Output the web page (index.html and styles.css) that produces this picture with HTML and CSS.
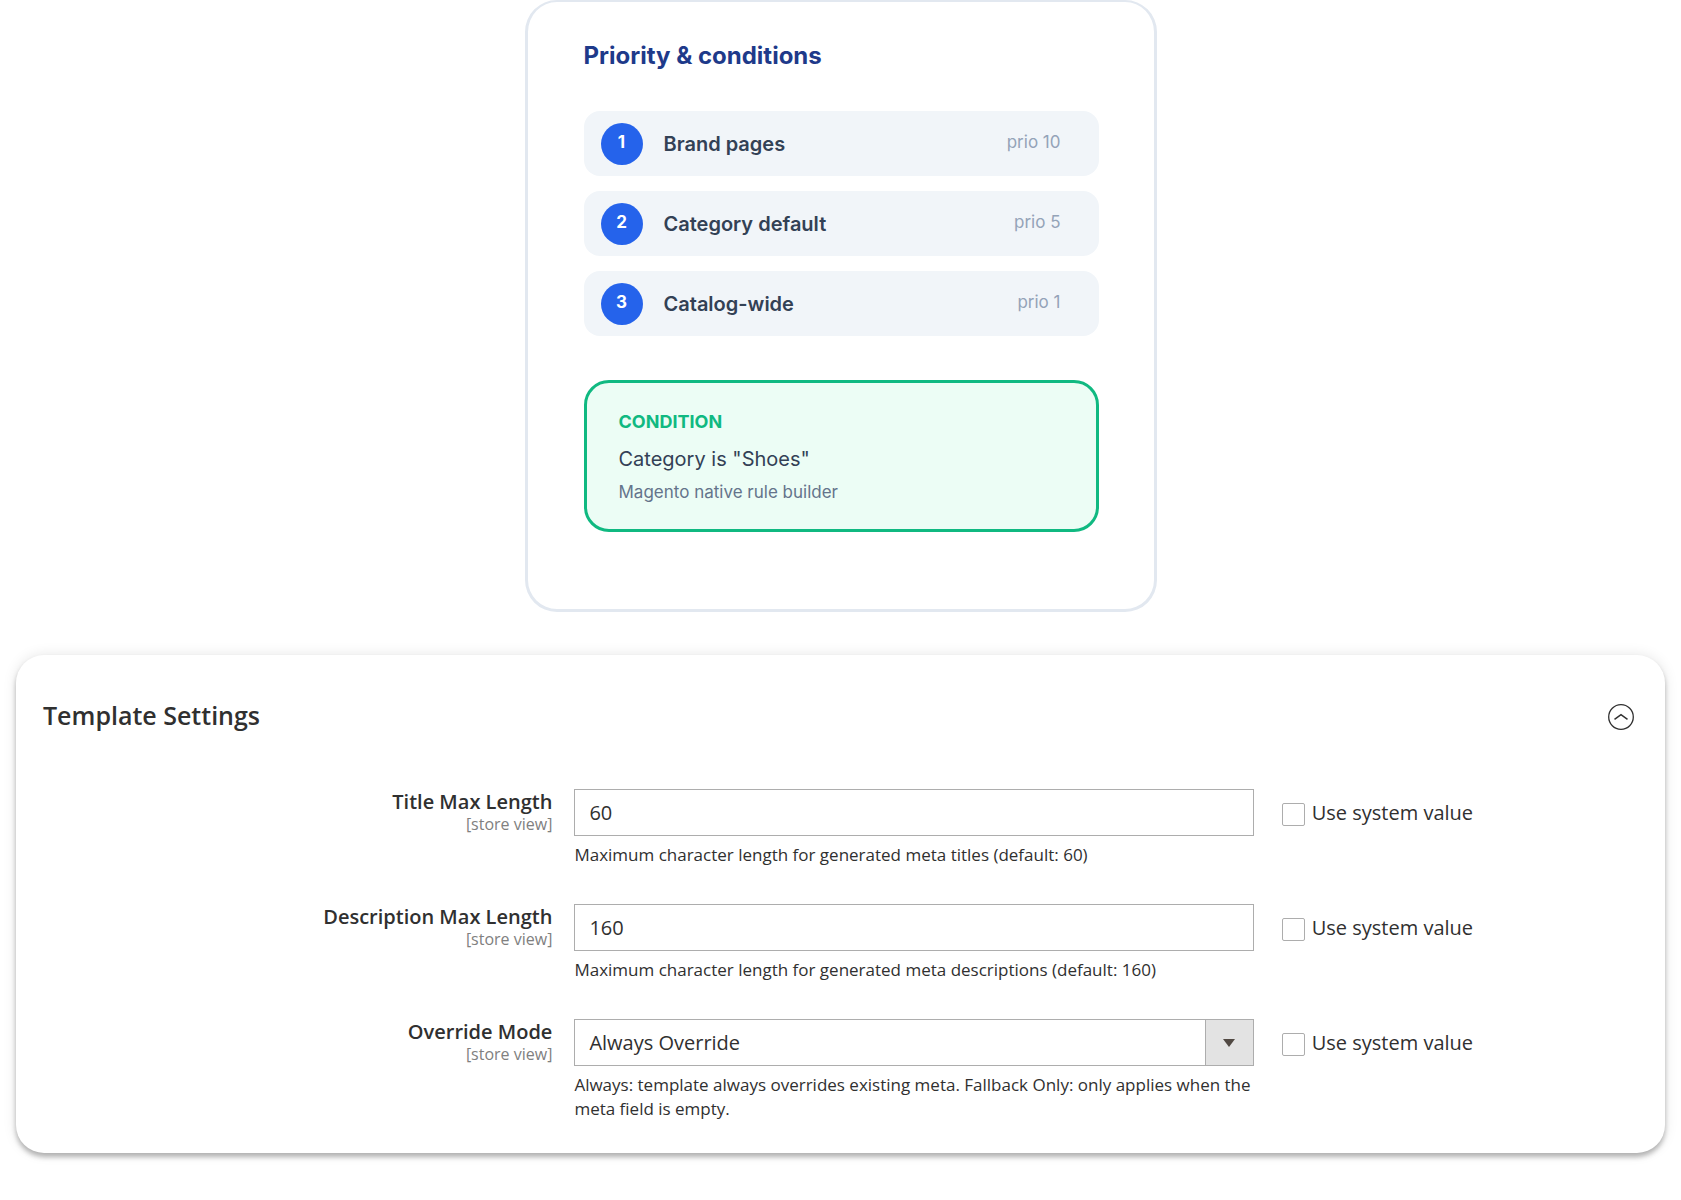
FILE: index.html
```html
<!DOCTYPE html>
<html lang="en">

<head>
    <meta charset="UTF-8">
    <meta name="viewport" content="width=device-width, initial-scale=1.0">
    <title>Template Settings</title>
    <link rel="stylesheet" href="styles.css">
</head>

<body>
    <section class="priority-card">
        <h2>Priority &amp; conditions</h2>
        <ol class="rules">
            <li class="rule">
                <span class="rule-number">1</span>
                <span class="rule-name">Brand pages</span>
                <span class="rule-prio">prio 10</span>
            </li>
            <li class="rule">
                <span class="rule-number">2</span>
                <span class="rule-name">Category default</span>
                <span class="rule-prio">prio 5</span>
            </li>
            <li class="rule">
                <span class="rule-number">3</span>
                <span class="rule-name">Catalog-wide</span>
                <span class="rule-prio">prio 1</span>
            </li>
        </ol>
        <div class="condition">
            <h3>CONDITION</h3>
            <p class="condition-rule">Category is "Shoes"</p>
            <p class="condition-note">Magento native rule builder</p>
        </div>
    </section>

    <form class="settings">
        <div class="settings-header">
            <h2>Template Settings</h2>
            <button type="button" class="collapse" aria-label="Collapse section">
                <svg width="26" height="26" viewBox="0 0 26 26" fill="none" stroke="#303030">
                    <circle cx="13" cy="13" r="12.3" stroke-width="1.3" />
                    <path d="M6.5 15.3 L13 10.7 L19.5 15.3" stroke-width="1.5" />
                </svg>
            </button>
        </div>

        <div class="field">
            <label class="field-label" for="titleLength">Title Max Length <span class="scope">[store view]</span></label>
            <div class="field-control">
                <input type="text" id="titleLength" name="titleLength" value="60">
                <p class="note">Maximum character length for generated meta titles (default: 60)</p>
            </div>
            <div class="use-system">
                <input type="checkbox" id="titleSystem" name="titleSystem">
                <label for="titleSystem">Use system value</label>
            </div>
        </div>

        <div class="field">
            <label class="field-label" for="descLength">Description Max Length <span class="scope">[store view]</span></label>
            <div class="field-control">
                <input type="text" id="descLength" name="descLength" value="160">
                <p class="note">Maximum character length for generated meta descriptions (default: 160)</p>
            </div>
            <div class="use-system">
                <input type="checkbox" id="descSystem" name="descSystem">
                <label for="descSystem">Use system value</label>
            </div>
        </div>

        <div class="field">
            <label class="field-label" for="overrideMode">Override Mode <span class="scope">[store view]</span></label>
            <div class="field-control">
                <div class="select-wrap">
                    <select id="overrideMode" name="overrideMode">
                        <option>Always Override</option>
                        <option>Fallback Only</option>
                    </select>
                    <span class="select-arrow"></span>
                </div>
                <p class="note">Always: template always overrides existing meta. Fallback Only: only applies when the meta field is empty.</p>
            </div>
            <div class="use-system">
                <input type="checkbox" id="overrideSystem" name="overrideSystem">
                <label for="overrideSystem">Use system value</label>
            </div>
        </div>
    </form>
</body>

</html>
```

FILE: styles.css
```css
* {
    box-sizing: border-box;
}

body {
    margin: 0;
    background-color: white;
    font-family: "Open Sans", sans-serif;
    color: #303030;
}

h2,
h3,
p {
    margin: 0;
}

/* Priority card */

.priority-card {
    max-width: 632px;
    margin: 0 auto;
    padding: 38px 55px 77px 56px;
    border: 3px solid #e2e8f0;
    border-top-width: 2px;
    border-radius: 32px;
    font-family: Inter, sans-serif;
}

.priority-card h2 {
    font-size: 24px;
    line-height: 32px;
    font-weight: 700;
    color: #1e3a8a;
}

.rules {
    display: flex;
    flex-direction: column;
    gap: 15px;
    margin: 39px 0 44px;
    padding: 0;
    list-style: none;
}

.rule {
    display: flex;
    align-items: center;
    height: 65px;
    padding: 0 38px 0 17px;
    border-radius: 16px;
    background-color: #f1f5f9;
}

.rule-number {
    width: 42px;
    height: 42px;
    margin-right: 21px;
    border-radius: 50%;
    background-color: #2563eb;
    color: white;
    font-size: 17px;
    line-height: 38px;
    font-weight: 700;
    text-align: center;
}

.rule-name {
    flex: 1;
    font-size: 20px;
    font-weight: 600;
    color: #334155;
}

.rule-prio {
    padding-bottom: 4px;
    font-size: 17px;
    color: #94a3b8;
}

.condition {
    padding: 23px 32px 25px;
    border: 3px solid #10b981;
    border-radius: 25px;
    background-color: #ecfdf5;
}

.condition h3 {
    font-size: 18px;
    line-height: 32px;
    font-weight: 700;
    color: #10b981;
}

.condition-rule {
    font-size: 20px;
    line-height: 42px;
    color: #334155;
}

.condition-note {
    font-size: 17px;
    line-height: 24px;
    color: #64748b;
}

/* Template settings */

.settings {
    margin: 43px 16px 47px;
    padding: 43px 31px 32px 27px;
    border-radius: 28px;
    background-color: white;
    box-shadow: 0 4px 5px rgba(0, 0, 0, 0.27), 0 0 14px rgba(0, 0, 0, 0.1);
}

.settings-header {
    display: flex;
    align-items: center;
    justify-content: space-between;
    margin-bottom: 54px;
}

.settings-header h2 {
    padding-bottom: 3px;
    font-size: 25px;
    line-height: 34px;
    font-weight: 600;
}

.collapse {
    display: flex;
    padding: 0;
    border: none;
    background: none;
    cursor: pointer;
}

.field {
    display: grid;
    grid-template-columns: 33.4% 42.7% 1fr;
    margin-top: 37px;
}

.field-label {
    padding-right: 22px;
    font-size: 20px;
    line-height: 26px;
    font-weight: 600;
    text-align: right;
}

.scope {
    display: block;
    font-size: 16px;
    line-height: 18px;
    font-weight: 400;
    color: #808080;
}

.field-control input,
.field-control select {
    display: block;
    width: 100%;
    height: 47px;
    padding: 0 14px;
    border: 1px solid #adadad;
    border-radius: 0;
    background-color: white;
    color: #303030;
    font-family: inherit;
    font-size: 20px;
}

.field-control select {
    appearance: none;
}

.select-wrap {
    position: relative;
}

.select-arrow {
    position: absolute;
    top: 0;
    right: 0;
    bottom: 0;
    display: flex;
    align-items: center;
    justify-content: center;
    width: 49px;
    border: 1px solid #adadad;
    background-color: #e3e3e3;
    pointer-events: none;
}

.select-arrow::after {
    content: "";
    border-top: 8px solid #514943;
    border-left: 6px solid transparent;
    border-right: 6px solid transparent;
}

.note {
    margin-top: 7px;
    font-size: 17px;
    line-height: 24px;
}

.use-system {
    display: flex;
    align-items: center;
    height: 47px;
    padding-left: 28px;
    font-size: 20px;
}

.use-system input {
    appearance: none;
    width: 23px;
    height: 23px;
    margin: 3px 7px 0 0;
    border: 1px solid #adadad;
    border-radius: 2px;
    background-color: white;
}
```
